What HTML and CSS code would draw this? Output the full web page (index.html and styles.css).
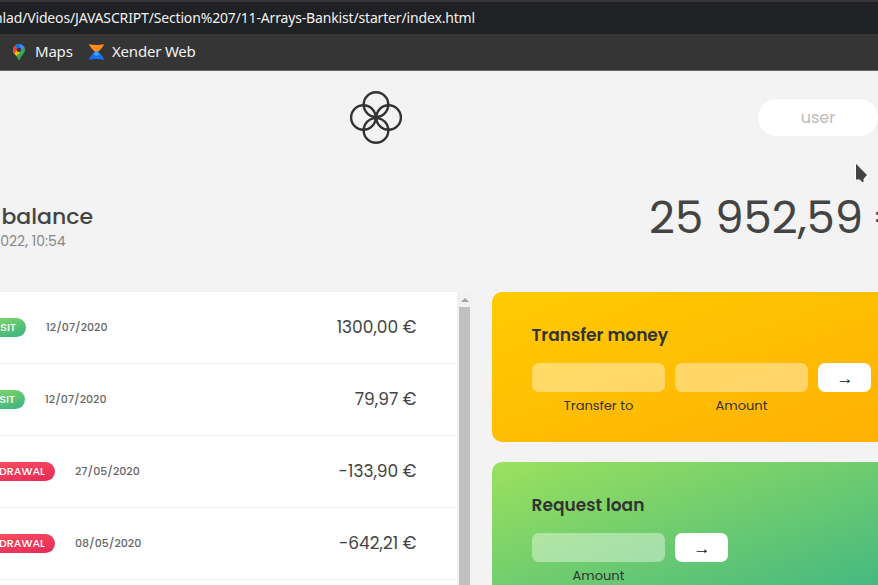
FILE: index.html
```html
<!DOCTYPE html>
<html lang="en">
<head>
<meta charset="utf-8">
<title>Bankist</title>
<link rel="stylesheet" href="styles.css">
</head>
<body>
<header class="browser">
  <div class="address"><span class="url">hlad/Videos/JAVASCRIPT/Section%207/11-Arrays-Bankist/starter/index.html</span></div>
  <div class="bookmarks">
    <svg class="pin" viewBox="0 0 12 16">
      <clipPath id="pin-shape"><path d="M6 0C2.6 0 0 2.6 0 5.8C0 8 1 9.2 2.5 11C4 12.8 4.7 14 5.2 15.5Q6 16.5 6.8 15.5C7.3 14 8 12.8 9.5 11C11 9.2 12 8 12 5.8C12 2.6 9.4 0 6 0Z"/></clipPath>
      <g clip-path="url(#pin-shape)">
        <path fill="#34a853" d="M0 0H12V16H0Z"/>
        <path fill="#fbbc04" d="M0 5L4 5L8.5 7L2.2 13L0 10Z"/>
        <path fill="#ea4335" d="M0 1L2 1L6 5L0 10Z"/>
        <path fill="#1a73e8" d="M1 1L4 0H9L6 5L4.2 4.8Z"/>
        <path fill="#4285f4" d="M8 0L12 3L7 8L5 5Z"/>
      </g>
      <circle cx="6" cy="5.7" r="2.2" fill="#353535"/>
    </svg>
    <span class="bookmark maps">Maps</span>
    <svg class="xender" viewBox="0 0 15 16">
      <path fill="#ff8a1f" d="M0 0Q3 1 7.5 1T15 0Q14 4 7.5 9Q1 4 0 0Z"/>
      <path fill="#1672f3" d="M7.5 7Q1 11 0 16Q3 15 7.5 15T15 16Q14 11 7.5 7Z"/>
      <path fill="#30a7ff" d="M7.5 7L4 10L7.5 12L11 10Z"/>
    </svg>
    <span class="bookmark web">Xender Web</span>
  </div>
</header>
<div class="page">
  <nav class="nav">
    <svg class="logo" viewBox="0 0 54 54">
      <g fill="none" stroke="#333" stroke-width="2.4">
        <circle cx="27" cy="13.6" r="12.3"/><circle cx="14.4" cy="26.5" r="12.3"/>
        <circle cx="39.6" cy="26.5" r="12.3"/><circle cx="27" cy="39.4" r="12.3"/>
      </g>
    </svg>
    <input class="login" placeholder="user">
  </nav>
  <main class="app">
    <section class="balance">
      <div class="summary">
        <p class="label">Current balance</p>
        <p class="date">As of 05/07/2022, 10:54</p>
      </div>
      <p class="total"><span class="total-number">25 952,59</span><span class="total-sign">€</span></p>
    </section>
    <section class="columns">
      <div class="movements">
        <div class="rows">
          <div class="row"><span class="type deposit first">8 deposit</span><span class="when">12/07/2020</span><span class="value">1300,00 €</span></div>
          <div class="row"><span class="type deposit">7 deposit</span><span class="when">12/07/2020</span><span class="value">79,97 €</span></div>
          <div class="row"><span class="type withdrawal">6 withdrawal</span><span class="when">27/05/2020</span><span class="value">-133,90 €</span></div>
          <div class="row"><span class="type withdrawal">5 withdrawal</span><span class="when">08/05/2020</span><span class="value">-642,21 €</span></div>
          <div class="row"></div>
        </div>
        <div class="scrollbar"><i class="up"></i><i class="thumb"></i></div>
      </div>
      <div class="operations">
        <div class="card transfer">
          <h2>Transfer money</h2>
          <form class="form">
            <input class="field"><input class="field"><button class="go" type="button">→</button>
            <label>Transfer to</label><label>Amount</label>
          </form>
        </div>
        <div class="card loan">
          <h2>Request loan</h2>
          <form class="form">
            <input class="field"><button class="go" type="button">→</button><span></span>
            <label>Amount</label>
          </form>
        </div>
      </div>
    </section>
  </main>
</div>
<svg class="cursor" viewBox="0 0 14 22"><path d="M1.5 0.8V18H5.5L9 21L10 20.5V17L13.5 13Z" fill="#444" stroke="#fff" stroke-width="1"/></svg>
</body>
</html>
```
FILE: styles.css
```css
* { margin: 0; padding: 0; box-sizing: border-box; }
html { overflow: hidden; }
body {
  width: 878px; height: 585px; overflow: hidden; position: relative;
  background: #f3f3f3; color: #444;
  font-family: Poppins, Inter, sans-serif;
}
.browser { height: 71px; background: #353535; border-bottom: 1px solid #666; padding-top: 2px; font-family: "Noto Sans", sans-serif; color: #f1f1f1; }
.address { height: 32px; width: 100%; background: #202124; display: flex; }
.url { width: 475px; display: flex; justify-content: flex-end; font-size: 14px; letter-spacing: -.16px; line-height: 32px; white-space: nowrap; }
.bookmarks { height: 36px; display: flex; align-items: center; padding-left: 13px; }
.pin { width: 12px; height: 16px; }
.maps { margin-left: 10px; width: 54px; }
.bookmark { height: 36px; font-size: 15px; letter-spacing: -.2px; line-height: 34px; white-space: nowrap; }
.xender { width: 15px; height: 16px; }
.web { margin-left: 8px; }
.page { height: 514px; overflow: hidden; }
.nav { height: 93px; display: flex; align-items: center; padding-left: 349px; }
.logo { width: 54px; height: 54px; }
.login { margin-left: 355px; width: 120px; height: 37px; border: 0; border-radius: 19px; background: #fff; text-align: center; font: 16px Poppins, Inter, sans-serif; }
.login::placeholder { color: #bbb; }
.app { width: 1000px; margin-left: -88px; }
.balance { height: 128px; padding-top: 39px; display: flex; }
.summary { width: 737px; }
.label { width: 181px; display: flex; justify-content: flex-end; font-size: 22px; font-weight: 500; line-height: 28px; white-space: nowrap; }
.date { width: 153.5px; display: flex; justify-content: flex-end; font-size: 14px; line-height: 21px; color: #888; white-space: nowrap; }
.total { display: flex; font-size: 45px; line-height: 30px; white-space: nowrap; }
.total-number { width: 226px; }
.columns { display: grid; grid-template-columns: 560px 420px; gap: 20px; }
.movements { height: 360px; display: flex; background: #fff; overflow: hidden; }
.rows { width: 545px; }
.row { height: 72px; border-bottom: 1px solid #eee; padding: 0 40.5px 0 40px; display: flex; align-items: center; }
.type { height: 19px; width: 73px; border-radius: 10px; padding-right: 10px; display: flex; justify-content: flex-end; font-size: 11px; font-weight: 500; line-height: 19px; color: #fff; text-transform: uppercase; white-space: nowrap; }
.first { width: 74px; }
.deposit { background: linear-gradient(to top left, #39b385, #9be15d); }
.withdrawal { width: 103px; background: linear-gradient(to top left, #e52a5a, #ff585f); }
.when { margin-left: 20px; font-size: 11px; font-weight: 500; color: #666; }
.value { margin-left: auto; padding-bottom: 2px; font-size: 17px; }
.scrollbar { width: 15px; background: #f1f1f1; display: flex; flex-direction: column; align-items: center; }
.up { margin: 6px 0 5px; border: 4px solid transparent; border-top: 0; border-bottom-color: #a3a3a3; }
.thumb { width: 11px; flex: 1; background: #c1c1c1; }
.operations { display: flex; flex-direction: column; gap: 20px; }
.card { height: 150px; border-radius: 10px; padding: 30px 40px; color: #333; }
.transfer { background: linear-gradient(to top left, #ffb003, #ffcb03); }
.loan { background: linear-gradient(to top left, #39b385, #9be15d); }
.card h2 { margin-left: -.5px; font-size: 17px; font-weight: 600; line-height: 26px; margin-bottom: 15px; white-space: nowrap; }
.form { display: grid; grid-template-columns: 133px 133px 53px; column-gap: 10px; }
.field { width: 100%; height: 29px; border: 0; border-radius: 7px; background: rgba(255,255,255,.4); }
.go { width: 53px; height: 29px; padding: 2px 0 0 1px; border: 0; border-radius: 7px; background: #fff; color: #111; font: 17px "Liberation Serif", serif; }
.form label { text-align: center; font-size: 13px; line-height: 27px; }
.cursor { position: absolute; left: 854px; top: 162px; width: 14px; height: 22px; }
```
